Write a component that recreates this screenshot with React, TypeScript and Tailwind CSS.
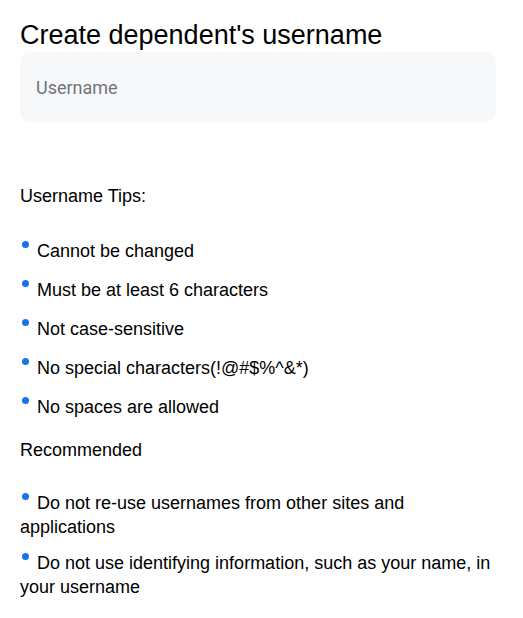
import React from 'react';

const tips = [
  'Cannot be changed',
  'Must be at least 6 characters',
  'Not case-sensitive',
  'No special characters(!@#$%^&*)',
  'No spaces are allowed',
];

const recommended = [
  'Do not re-use usernames from other sites and applications',
  'Do not use identifying information, such as your name, in your username',
];

function Dot() {
  return <span className="inline-block w-[7px] h-[7px] rounded-full bg-[#1a73e8] mr-[8px] ml-[2px] align-[9px]" />;
}

export default function App() {
  return (
    <div className="min-h-screen bg-white pl-5 pr-[27px] pt-[18px] font-['Liberation_Sans',Arial,sans-serif] text-black">
      <h1 className="text-[27px] leading-[34px]">Create dependent's username</h1>
      <input
        placeholder="Username"
        className="block w-full h-[70px] rounded-[10px] bg-[#f7f8fa] px-4 font-['Roboto',sans-serif] text-[18px] text-[#333] placeholder:text-[#70757a] outline-none"
      />

      <p className="mt-[64px] text-[18px] leading-[20px]">Username Tips:</p>

      <ul className="mt-[35px] flex flex-col gap-[19px]">
        {tips.map((t) => (
          <li key={t} className="text-[18px] leading-[20px]">
            <Dot />
            {t}
          </li>
        ))}
      </ul>

      <p className="mt-[23px] text-[18px] leading-[20px]">Recommended</p>

      <ul className="mt-[31px] flex flex-col gap-[12px]">
        {recommended.map((t) => (
          <li key={t} className="text-[18px] leading-[24px]">
            <Dot />
            {t}
          </li>
        ))}
      </ul>
    </div>
  );
}
